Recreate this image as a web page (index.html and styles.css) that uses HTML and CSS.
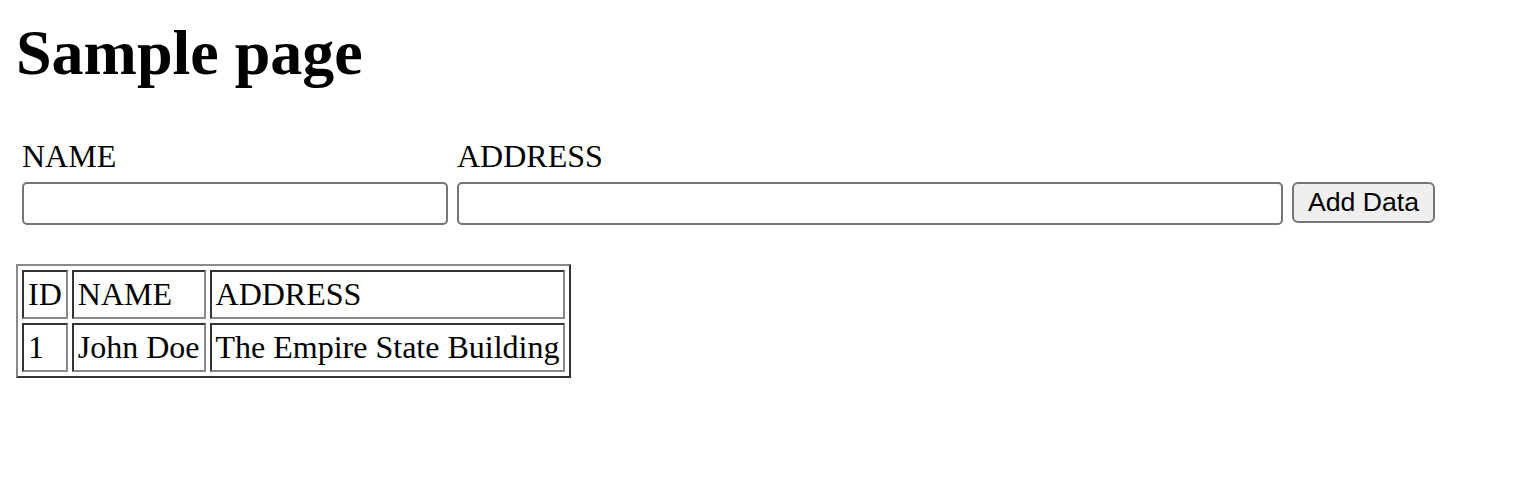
FILE: index.html
```html
<!DOCTYPE html>
<html>
<head>
<meta charset="utf-8">
<title>Sample page</title>
<link rel="stylesheet" href="styles.css">
</head>
<body>
<h1 class="title">Sample page</h1>
<form class="entry">
  <label class="entry-label" for="name">NAME</label>
  <label class="entry-label" for="address">ADDRESS</label>
  <span></span>
  <input class="field field-name" id="name" type="text">
  <input class="field field-address" id="address" type="text">
  <button class="add-btn" type="button">Add Data</button>
</form>
<table class="data">
  <tr><td>ID</td><td>NAME</td><td>ADDRESS</td></tr>
  <tr><td>1</td><td>John Doe</td><td>The Empire State Building</td></tr>
</table>
</body>
</html>
```
FILE: styles.css
```css
html, body {
  background: #ffffff;
}
body {
  margin: 16px;
  font-family: "Liberation Serif", "Times New Roman", serif;
  font-size: 32px;
  color: #000000;
}
.title {
  margin: 0 0 48px;
  font-size: 64px;
  font-weight: bold;
}
.entry {
  display: grid;
  grid-template-columns: 426px 826px 143px;
  column-gap: 9px;
  row-gap: 7px;
  padding-left: 6px;
  align-items: start;
}
.entry-label {
  font-size: 32px;
}
.field {
  box-sizing: border-box;
  height: 43px;
  margin: 0;
  border: 2px solid #767676;
  border-radius: 5px;
  background: #ffffff;
  font-family: "Liberation Sans", Arial, sans-serif;
  font-size: 26.67px;
}
.field-name { width: 426px; }
.field-address { width: 826px; }
.add-btn {
  box-sizing: border-box;
  width: 143px;
  height: 41px;
  margin: 0;
  padding: 0;
  border: 2px solid #767676;
  border-radius: 6px;
  background: #efefef;
  color: #000000;
  font-family: "Liberation Sans", Arial, sans-serif;
  font-size: 26.67px;
}
.data {
  margin-top: 39px;
  border-collapse: separate;
  border-spacing: 4px;
  border-width: 2px;
  border-style: solid;
  border-color: #8a8a8a #333333 #333333 #8a8a8a;
}
.data td {
  padding: 4px;
  border-width: 2px;
  border-style: solid;
  border-color: #333333 #8a8a8a #8a8a8a #333333;
  font-size: 32px;
}
```
